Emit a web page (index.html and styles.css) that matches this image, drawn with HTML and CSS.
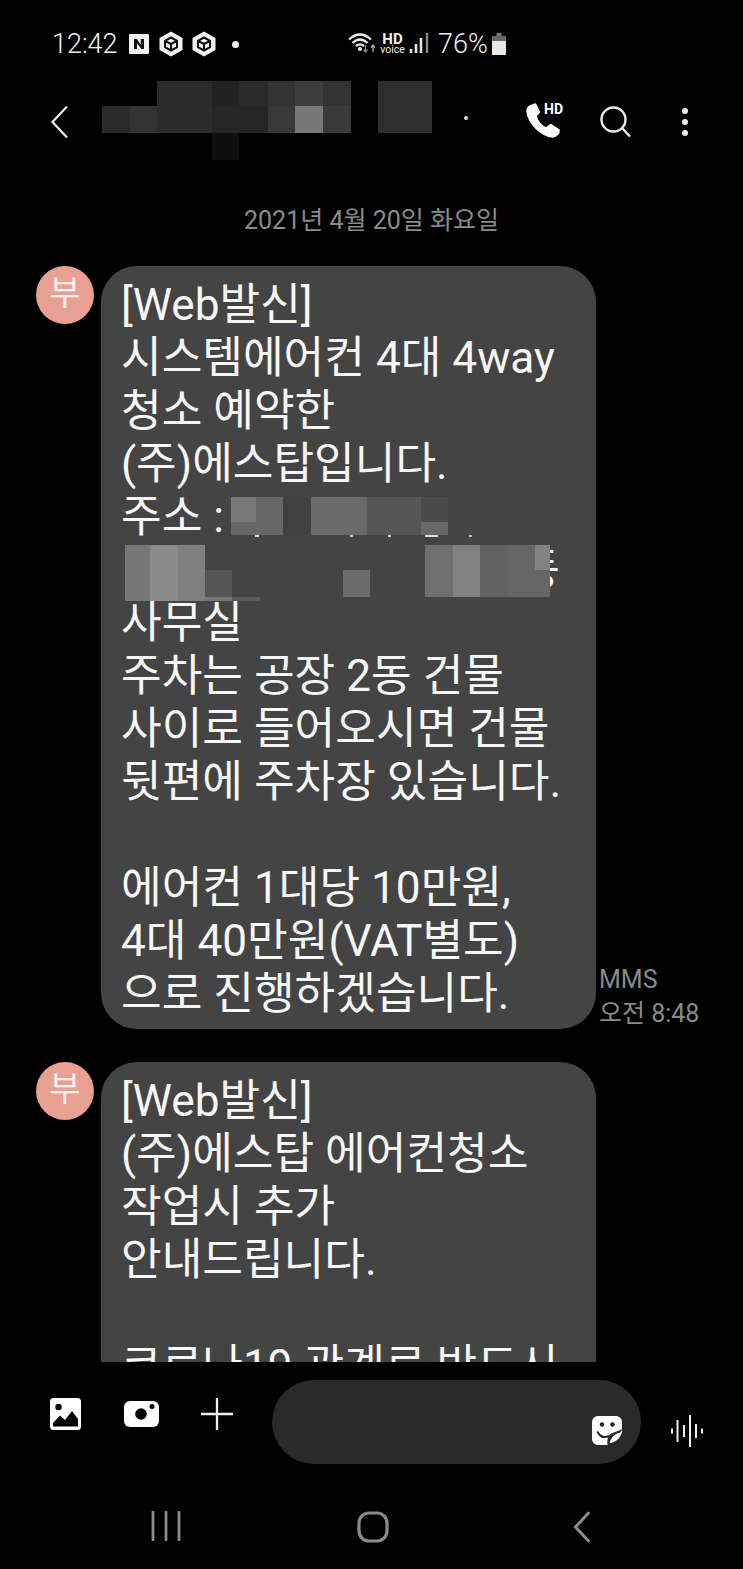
FILE: index.html
```html
<!DOCTYPE html>
<html lang="ko">
<head>
    <meta charset="UTF-8">
    <title>메시지</title>
    <link rel="stylesheet" href="styles.css">
</head>
<body>
<div class="phone">
    <!--상태바-->
    <div class="status">
        <div class="status-left">
            <span class="clock">12:42</span>
            <svg width="22" height="22" viewBox="0 0 22 22"><rect x="1" y="1" width="20" height="20" rx="1" fill="#f2f2f2"/><path d="M6 16V6h2.800l4 5.500V6H16v10h-2.600L9 10.300V16z" fill="#111"/></svg>
            <svg class="hex" width="24" height="26" viewBox="0 0 24 26"><path d="M12 1.500l10.500 6v11L12 24.500 1.500 18.500v-11z" fill="#f2f2f2" stroke="#f2f2f2" stroke-width="2" stroke-linejoin="round"/><path d="M12 6.500l6 3.300v6.400l-6 3.300-6-3.300V9.800zM6 9.800l6 3.200 6-3.200M12 13v6.500" fill="none" stroke="#111" stroke-width="2"/></svg>
            <svg class="hex" width="24" height="26" viewBox="0 0 24 26"><path d="M12 1.500l10.500 6v11L12 24.500 1.500 18.500v-11z" fill="#f2f2f2" stroke="#f2f2f2" stroke-width="2" stroke-linejoin="round"/><path d="M12 6.500l6 3.300v6.400l-6 3.300-6-3.300V9.800zM6 9.800l6 3.200 6-3.200M12 13v6.500" fill="none" stroke="#111" stroke-width="2"/></svg>
            <span class="dot"></span>
        </div>
        <div class="status-right">
            <svg width="28" height="26" viewBox="0 0 28 26"><path d="M1 8.500Q12 -1.500 23 8.500M4.500 12Q12 5 19.500 12M8 15.200Q12 11.500 16 15.200" fill="none" stroke="#eee" stroke-width="2.300"/><circle cx="12" cy="18" r="2" fill="#eee"/><path d="M17.500 14v6M15.500 18.500l2 2.500 2-2.500" fill="none" stroke="#888" stroke-width="1.300"/><path d="M25 21v-6M23 16.500l2-2.500 2 2.500" fill="none" stroke="#aaa" stroke-width="1.300"/></svg>
            <div class="hd-voice"><b>HD</b><span>voice</span></div>
            <svg width="20" height="26" viewBox="0 0 20 26"><path d="M2 18v4M7 13v9M12 7v15" stroke="#e4e4e4" stroke-width="2.600"/><path d="M18 2v20" stroke="#888" stroke-width="2.400"/></svg>
            <span class="battery-text">76%</span>
            <svg width="14" height="22" viewBox="0 0 14 22"><rect x="4.500" y="0" width="5" height="4" fill="#777"/><rect x="0" y="3" width="14" height="6" fill="#666"/><rect x="0" y="8" width="14" height="14" fill="#e8e8e8"/></svg>
        </div>
    </div>

    <!--상단바-->
    <div class="appbar">
        <svg width="20" height="34" viewBox="0 0 20 34"><path d="M17 1.500L2.500 17 17 32.500" fill="none" stroke="#eee" stroke-width="2.200"/></svg>
        <svg class="title-blur" width="330" height="80" viewBox="102 81 330 80">
            <rect x="157" y="81" width="55" height="25" fill="#2a2a2a"/>
            <rect x="212" y="81" width="27" height="25" fill="#222"/>
            <rect x="239" y="81" width="29" height="25" fill="#2a2a2a"/>
            <rect x="268" y="81" width="27" height="25" fill="#333"/>
            <rect x="295" y="81" width="28" height="25" fill="#3d3d3d"/>
            <rect x="323" y="81" width="28" height="25" fill="#333"/>
            <rect x="378" y="81" width="54" height="52" fill="#2e2e2e"/>
            <rect x="102" y="106" width="28" height="27" fill="#2a2a2a"/>
            <rect x="130" y="106" width="27" height="27" fill="#333"/>
            <rect x="157" y="106" width="55" height="27" fill="#2b2b2b"/>
            <rect x="212" y="106" width="56" height="27" fill="#252525"/>
            <rect x="268" y="106" width="27" height="27" fill="#383838"/>
            <rect x="295" y="106" width="28" height="27" fill="#777"/>
            <rect x="323" y="106" width="28" height="27" fill="#3a3a3a"/>
            <rect x="212" y="133" width="27" height="27" fill="#0e0e0e"/>
        </svg>
        <span class="mid-dot"></span>
        <div class="appbar-actions">
            <div class="call">
                <svg width="38" height="38" viewBox="0 0 38 38"><path d="M5 2.500L9.500 1l4 8-3.500 4c1 5 5.500 10 10 12l4.500-3.500L33 27c.5 3-2 6-6 7C15 33 2 20 1 8c0-2.500 2-5 4-5.500z" fill="#fff" stroke="#fff" stroke-width="1.500" stroke-linejoin="round"/></svg>
                <span class="call-hd">HD</span>
            </div>
            <svg width="34" height="34" viewBox="0 0 34 34"><circle cx="14.500" cy="14.500" r="12" fill="none" stroke="#eee" stroke-width="2.400"/><path d="M23 23l8 8.500" stroke="#eee" stroke-width="2.400"/></svg>
            <svg class="more" width="8" height="32" viewBox="0 0 8 32"><circle cx="4" cy="5" r="3" fill="#eee"/><circle cx="4" cy="16" r="3" fill="#eee"/><circle cx="4" cy="27" r="3" fill="#eee"/></svg>
        </div>
    </div>

    <!--메시지 목록-->
    <div class="thread">
        <div class="date">2021년 4월 20일 화요일</div>

        <div class="msg">
            <div class="avatar">부</div>
            <div class="bubble">
                <div>[Web발신]</div>
                <div>시스템에어컨 4대 4way</div>
                <div>청소 예약한</div>
                <div>(주)에스탑입니다.</div>
                <div>주소 :</div>
                <div class="addr-end">동</div>
                <div>사무실</div>
                <div>주차는 공장 2동 건물</div>
                <div>사이로 들어오시면 건물</div>
                <div>뒷편에 주차장 있습니다.</div>
                <div>&nbsp;</div>
                <div>에어컨 1대당 10만원,</div>
                <div>4대 40만원(VAT별도)</div>
                <div>으로 진행하겠습니다.</div>
                <svg class="addr-blur" width="425" height="104" viewBox="125 497 425 104">
                    <rect x="231" y="497" width="25" height="25" fill="#787878"/>
                    <rect x="231" y="522" width="25" height="13" fill="#666"/>
                    <rect x="256" y="497" width="27" height="38" fill="#686868"/>
                    <rect x="283" y="497" width="28" height="38" fill="#414141"/>
                    <rect x="311" y="497" width="56" height="38" fill="#6a6a6a"/>
                    <rect x="367" y="497" width="54" height="38" fill="#565656"/>
                    <rect x="421" y="497" width="27" height="25" fill="#4b4b4b"/>
                    <rect x="421" y="522" width="27" height="13" fill="#686868"/>
                    <rect x="255" y="535" width="4" height="2" fill="#ddd"/>
                    <rect x="350" y="535" width="3" height="2" fill="#ccc"/>
                    <rect x="388" y="535" width="3" height="2" fill="#ccc"/>
                    <rect x="425" y="535" width="13" height="2" fill="#ddd"/>
                    <rect x="469" y="535" width="3" height="2" fill="#bbb"/>
                    <rect x="125" y="545" width="25" height="56" fill="#777"/>
                    <rect x="150" y="545" width="28" height="56" fill="#8c8c8c"/>
                    <rect x="178" y="545" width="27" height="56" fill="#808080"/>
                    <rect x="205" y="570" width="27" height="27" fill="#555"/>
                    <rect x="205" y="597" width="27" height="4" fill="#777"/>
                    <rect x="232" y="597" width="28" height="4" fill="#5a5a5a"/>
                    <rect x="343" y="570" width="27" height="27" fill="#6c6c6c"/>
                    <rect x="425" y="545" width="28" height="52" fill="#6f6f6f"/>
                    <rect x="453" y="545" width="27" height="52" fill="#828282"/>
                    <rect x="480" y="545" width="28" height="52" fill="#626262"/>
                    <rect x="508" y="545" width="27" height="52" fill="#666"/>
                    <rect x="535" y="545" width="15" height="25" fill="#838383"/>
                    <rect x="535" y="570" width="15" height="27" fill="#666"/>
                </svg>
            </div>
            <div class="meta">
                <div>MMS</div>
                <div>오전 8:48</div>
            </div>
        </div>

        <div class="msg">
            <div class="avatar">부</div>
            <div class="bubble">
                <div>[Web발신]</div>
                <div>(주)에스탑 에어컨청소</div>
                <div>작업시 추가</div>
                <div>안내드립니다.</div>
                <div>&nbsp;</div>
                <div>코로나19 관계로 반드시</div>
            </div>
        </div>
    </div>

    <!--입력창-->
    <div class="composer">
        <div class="tools">
            <svg width="33" height="34" viewBox="0 0 33 34"><rect x="1" y="1" width="31" height="32" rx="3.500" fill="#fff"/><circle cx="9.500" cy="10" r="3.200" fill="#000"/><path d="M4 29.500V26l7-7.500 5 4.500 7-9 6 8v7.500z" fill="#000"/></svg>
            <svg width="35" height="28" viewBox="0 0 35 28"><rect x="0" y="1" width="35" height="26" rx="6" fill="#fff"/><circle cx="17" cy="14" r="5.800" fill="#000"/><circle cx="28" cy="6.500" r="2.500" fill="#000"/></svg>
            <svg width="32" height="32" viewBox="0 0 32 32"><path d="M16 0v32M0 16h32" stroke="#eee" stroke-width="2.300"/></svg>
        </div>
        <div class="input-pill">
            <svg width="32" height="32" viewBox="0 0 32 32"><path d="M7 1h18a6 6 0 0 1 6 6v11L18 30H7a6 6 0 0 1-6-6V7a6 6 0 0 1 6-6z" fill="#fff"/><circle cx="11" cy="9.500" r="2.200" fill="#222"/><circle cx="21.500" cy="9.500" r="2.200" fill="#222"/><path d="M6.500 16.500c1.500 4.500 6 7 11.500 4.500" fill="none" stroke="#222" stroke-width="2.200"/><path d="M32 14L19 19c-2.500 3.500-3.500 7.500-2 13z" fill="#2a2a2a"/><path d="M30.500 17.500c-5 0-10 3.500-12 10.500 6-.5 11-4.500 12-10.500z" fill="#fff"/></svg>
        </div>
        <svg class="voice" width="34" height="34" viewBox="0 0 34 34"><path d="M2 14.500v5M7.500 6v22M14 11v12M20 1v32M26 10v14M32 14.500v5" stroke="#eee" stroke-width="2"/></svg>
    </div>

    <!--하단 내비게이션-->
    <div class="navbar">
        <svg width="30" height="30" viewBox="0 0 30 30"><path d="M2 1v28M15 1v28M28 1v28" stroke="#8a8a8a" stroke-width="2.800" stroke-linecap="round"/></svg>
        <svg width="32" height="32" viewBox="0 0 32 32"><rect x="2" y="2" width="28" height="28" rx="10" fill="none" stroke="#8a8a8a" stroke-width="3.200"/></svg>
        <svg class="nav-back" width="18" height="32" viewBox="0 0 18 32"><path d="M15.500 2L2.500 16l13 14" fill="none" stroke="#8a8a8a" stroke-width="3" stroke-linecap="round"/></svg>
    </div>
</div>
</body>
</html>
```

FILE: styles.css
```css
* {
    box-sizing: border-box;
}

html, body {
    margin: 0;
    background: #000;
}

body {
    font-family: Roboto, "Noto Sans CJK KR", sans-serif;
    color: #f2f2f2;
}

svg {
    display: block;
    flex: none;
}

.phone {
    width: 743px;
    height: 1569px;
    display: flex;
    flex-direction: column;
    overflow: hidden;
}

/* 상태바 */
.status {
    height: 88px;
    flex: none;
    display: flex;
    align-items: center;
    padding-left: 52px;
}

.status-left {
    width: 296px;
    display: flex;
    align-items: center;
    gap: 8px;
}

.clock {
    font-size: 27px;
    font-weight: 300;
    width: 68px;
}

.hex {
    margin-left: 1px;
}

.dot {
    width: 7px;
    height: 7px;
    border-radius: 50%;
    background: #eee;
    margin-left: 8px;
}

.status-right {
    display: flex;
    align-items: center;
    gap: 3px;
}

.hd-voice {
    display: flex;
    flex-direction: column;
    align-items: center;
    width: 27px;
}

.hd-voice b {
    font-size: 15px;
    font-weight: 700;
    line-height: 12px;
}

.hd-voice span {
    font-size: 10.5px;
    line-height: 10px;
}

.battery-text {
    font-size: 27px;
    font-weight: 300;
    margin: 0 1px 0 6px;
}

/* 상단바 */
.appbar {
    height: 68px;
    flex: none;
    display: flex;
    align-items: center;
    padding-left: 50px;
    position: relative;
}

.title-blur {
    position: absolute;
    left: 102px;
    top: -7px;
}

.mid-dot {
    position: absolute;
    left: 464px;
    top: 28px;
    width: 4px;
    height: 4px;
    border-radius: 50%;
    background: #ddd;
}

.appbar-actions {
    margin-left: auto;
    margin-right: 54px;
    display: flex;
    align-items: center;
    gap: 35px;
}

.more {
    margin-left: 13px;
}

.call {
    position: relative;
}

.call-hd {
    position: absolute;
    left: 18px;
    top: 0;
    font-size: 14px;
    font-weight: 700;
    line-height: 12px;
    color: #fff;
}

/* 메시지 */
.thread {
    height: 1206px;
    flex: none;
    overflow: hidden;
}

.date {
    height: 110px;
    padding-top: 48px;
    text-align: center;
    font-size: 25px;
    line-height: 34px;
    color: #8a8a8a;
}

.msg {
    display: flex;
    align-items: flex-start;
    padding-left: 36px;
    margin-bottom: 33px;
}

.avatar {
    width: 58px;
    height: 58px;
    flex: none;
    margin-right: 7px;
    border-radius: 50%;
    background: #e8a093;
    font-size: 34px;
    line-height: 54px;
    text-align: center;
    color: #fdf0ed;
}

.bubble {
    position: relative;
    width: 495px;
    flex: none;
    padding: 13px 22px 8px 20px;
    border-radius: 36px;
    background: #444;
    font-size: 44.2px;
    line-height: 53px;
    white-space: nowrap;
    color: #f6f6f6;
}

.addr-end {
    text-align: right;
    margin-right: 14px;
}

.addr-blur {
    position: absolute;
    left: 24px;
    top: 231px;
}

.meta {
    align-self: flex-end;
    margin: 0 0 -2px 3px;
    font-size: 25px;
    line-height: 34px;
    color: #8a8a8a;
    white-space: nowrap;
}

/* 입력창 */
.composer {
    height: 102px;
    flex: none;
    padding: 18px 0 0 49px;
    display: flex;
    align-items: flex-start;
}

.tools {
    width: 223px;
    height: 84px;
    display: flex;
    align-items: center;
    gap: 42px;
    padding-bottom: 16px;
}

.input-pill {
    width: 369px;
    height: 84px;
    flex: none;
    border-radius: 42px;
    background: #2a2a2a;
    display: flex;
    justify-content: flex-end;
    padding: 35px 18px 0 0;
}

.voice {
    margin: 34px 0 0 29px;
}

/* 내비게이션 */
.navbar {
    flex: 1;
    display: flex;
    align-items: flex-start;
    padding: 47px 0 0 151px;
    gap: 176px;
}

.nav-back {
    margin-left: 8px;
}
```
